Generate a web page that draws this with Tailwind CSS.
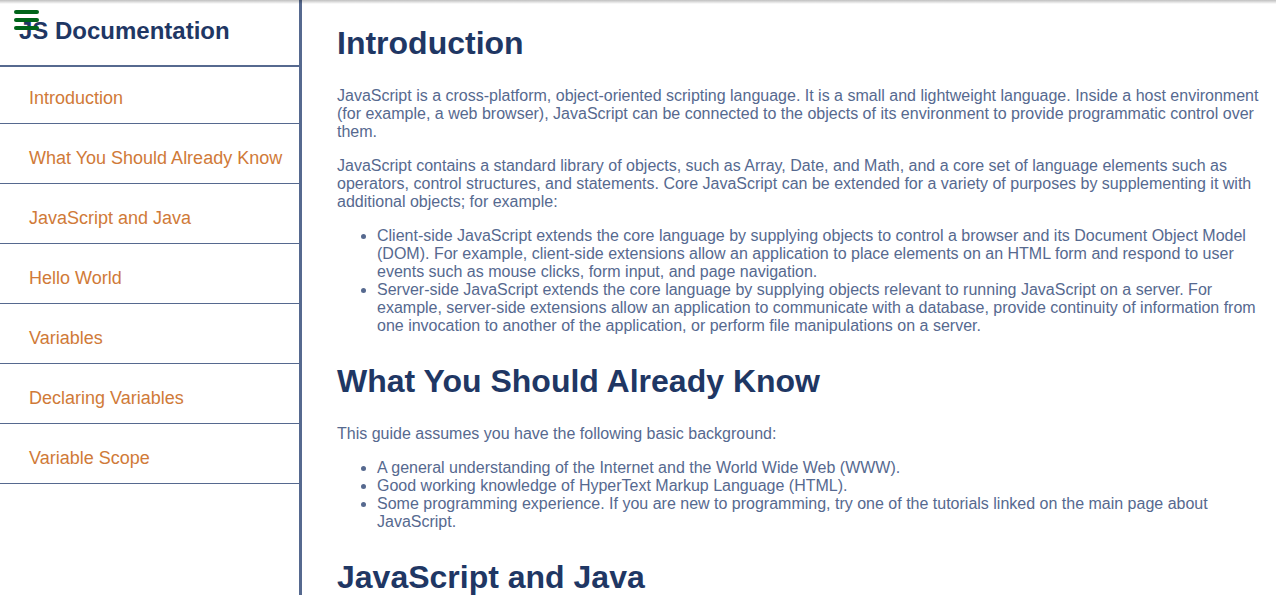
<!DOCTYPE html>
<html lang="en">
<head>
<meta charset="utf-8">
<meta name="viewport" content="width=device-width, initial-scale=1">
<title>JS Documentation</title>
<script src="https://cdn.jsdelivr.net/npm/@tailwindcss/browser@4"></script>
</head>
<body class="h-screen overflow-hidden bg-white font-['Liberation_Sans',Arial,sans-serif] text-base leading-[18px] text-[#56698f]">
<div class="relative flex h-full">
  <div class="pointer-events-none absolute inset-x-0 top-0 z-20 h-1 bg-linear-to-b from-black/25 to-transparent"></div>
  <button type="button" aria-label="Toggle menu" class="absolute top-2.5 left-3.5 z-10 flex flex-col gap-1">
    <span class="h-1 w-[25px] rounded-full bg-[#006419]"></span>
    <span class="h-1 w-[25px] rounded-full bg-[#006419]"></span>
    <span class="h-1 w-[25px] rounded-full bg-[#006419]"></span>
  </button>
  <nav class="w-[302px] shrink-0 border-r-3 border-[#56698f] text-lg leading-5 text-[#d07a38]" aria-label="Documentation">
    <header class="border-b-2 border-[#56698f] px-[19px] pt-4 pb-5 text-2xl leading-[29px] font-bold text-[#1f3764]">JS Documentation</header>
    <ul>
      <li><a href="#introduction" class="block border-b border-[#56698f] pt-[21px] pb-[15px] pl-[29px] whitespace-nowrap">Introduction</a></li>
      <li><a href="#what-you-should-know" class="block border-b border-[#56698f] pt-6 pb-[15px] pl-[29px] whitespace-nowrap">What You Should Already Know</a></li>
      <li><a href="#javascript-and-java" class="block border-b border-[#56698f] pt-6 pb-[15px] pl-[29px] whitespace-nowrap">JavaScript and Java</a></li>
      <li><a href="#hello-world" class="block border-b border-[#56698f] pt-6 pb-[15px] pl-[29px] whitespace-nowrap">Hello World</a></li>
      <li><a href="#variables" class="block border-b border-[#56698f] pt-6 pb-[15px] pl-[29px] whitespace-nowrap">Variables</a></li>
      <li><a href="#declaring-variables" class="block border-b border-[#56698f] pt-6 pb-[15px] pl-[29px] whitespace-nowrap">Declaring Variables</a></li>
      <li><a href="#variable-scope" class="block border-b border-[#56698f] pt-6 pb-[15px] pl-[29px] whitespace-nowrap">Variable Scope</a></li>
    </ul>
  </nav>
  <main class="min-w-0 flex-1 overflow-hidden pt-6 pr-3 pl-[35px]">
    <section id="introduction">
      <h1 class="mb-[25px] text-[32px] leading-[38px] font-bold text-[#1f3764]">Introduction</h1>
      <p class="mb-4">JavaScript is a cross-platform, object-oriented scripting language. It is a small and lightweight language. Inside a host environment (for example, a web browser), JavaScript can be connected to the objects of its environment to provide programmatic control over them.</p>
      <p class="mb-4">JavaScript contains a standard library of objects, such as Array, Date, and Math, and a core set of language elements such as operators, control structures, and statements. Core JavaScript can be extended for a variety of purposes by supplementing it with additional objects; for example:</p>
      <ul class="list-disc pl-10">
        <li>Client-side JavaScript extends the core language by supplying objects to control a browser and its Document Object Model (DOM). For example, client-side extensions allow an application to place elements on an HTML form and respond to user events such as mouse clicks, form input, and page navigation.</li>
        <li>Server-side JavaScript extends the core language by supplying objects relevant to running JavaScript on a server. For example, server-side extensions allow an application to communicate with a database, provide continuity of information from one invocation to another of the application, or perform file manipulations on a server.</li>
      </ul>
    </section>
    <section id="what-you-should-know" class="mt-[27px]">
      <h1 class="mb-[25px] text-[32px] leading-[38px] font-bold text-[#1f3764]">What You Should Already Know</h1>
      <p class="mb-4">This guide assumes you have the following basic background:</p>
      <ul class="list-disc pl-10">
        <li>A general understanding of the Internet and the World Wide Web (WWW).</li>
        <li>Good working knowledge of HyperText Markup Language (HTML).</li>
        <li>Some programming experience. If you are new to programming, try one of the tutorials linked on the main page about JavaScript.</li>
      </ul>
    </section>
    <section id="javascript-and-java" class="mt-[27px]">
      <h1 class="text-[32px] leading-[38px] font-bold text-[#1f3764]">JavaScript and Java</h1>
    </section>
  </main>
</div>
</body>
</html>
